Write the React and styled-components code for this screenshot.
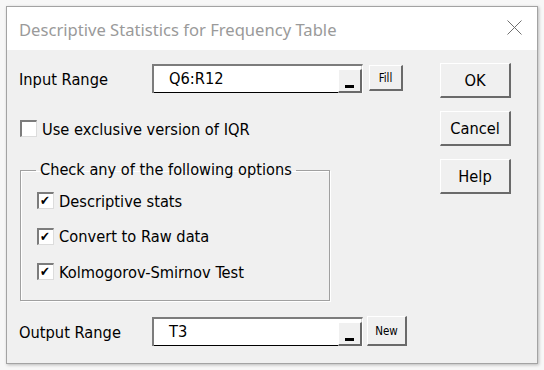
import React from "react"
import styled, { createGlobalStyle } from "styled-components"

const GlobalStyle = createGlobalStyle`
  html, body {
    margin: 0;
    padding: 0;
    background: #f7f7f7;
  }
  body {
    font-family: "DejaVu Sans Condensed", "DejaVu Sans", sans-serif;
    font-stretch: condensed;
  }
`

export default function App() {
  return (
    <>
      <GlobalStyle />
      <Janela>
        <BarraTitulo>
          <Titulo>Descriptive Statistics for Frequency Table</Titulo>
          <Fechar>
            <svg width="15" height="15" viewBox="0 0 15 15">
              <path d="M0.5 0.5 L14.5 14.5 M14.5 0.5 L0.5 14.5" stroke="#6f6f6f" strokeWidth="1" fill="none" />
            </svg>
          </Fechar>
        </BarraTitulo>
        <Corpo>
          <ColunaEsquerda>
            <Linha>
              <Rotulo>Input Range</Rotulo>
              <CaixaTexto>
                <Valor>Q6:R12</Valor>
                <BotaoSeta><Traco /></BotaoSeta>
              </CaixaTexto>
              <BotaoPequeno $largura={34} $altura={26}>Fill</BotaoPequeno>
            </Linha>

            <LinhaCheck $topo={27}>
              <Caixa />
              <TextoCheck>Use exclusive version of IQR</TextoCheck>
            </LinhaCheck>

            <Quadro>
              <Legenda>Check any of the following options</Legenda>
              <ListaOpcoes>
                <LinhaCheck>
                  <Caixa><Marca>✔</Marca></Caixa>
                  <TextoCheck>Descriptive stats</TextoCheck>
                </LinhaCheck>
                <LinhaCheck>
                  <Caixa><Marca>✔</Marca></Caixa>
                  <TextoCheck>Convert to Raw data</TextoCheck>
                </LinhaCheck>
                <LinhaCheck>
                  <Caixa><Marca>✔</Marca></Caixa>
                  <TextoCheck>Kolmogorov-Smirnov Test</TextoCheck>
                </LinhaCheck>
              </ListaOpcoes>
            </Quadro>

            <Linha $topo={15}>
              <Rotulo>Output Range</Rotulo>
              <CaixaTexto>
                <Valor>T3</Valor>
                <BotaoSeta><Traco /></BotaoSeta>
              </CaixaTexto>
              <BotaoPequeno $largura={40} $altura={30} $margem={4}>New</BotaoPequeno>
            </Linha>
          </ColunaEsquerda>

          <ColunaBotoes>
            <Botao>OK</Botao>
            <Botao>Cancel</Botao>
            <Botao>Help</Botao>
          </ColunaBotoes>
        </Corpo>
      </Janela>
    </>
  )
}

const Janela = styled.div`
  margin: 6px;
  width: 532px;
  height: 358px;
  box-sizing: border-box;
  border: 1px solid #a3a3a3;
  background: #f0f0f0;
  box-shadow: 1px 1px 3px rgba(0, 0, 0, 0.25);
  display: flex;
  flex-direction: column;
`

const BarraTitulo = styled.div`
  height: 43px;
  background: #ffffff;
  display: flex;
  align-items: center;
  justify-content: space-between;
  padding: 0 15px 0 12px;
`

const Titulo = styled.span`
  font-family: "Noto Sans", "Open Sans", sans-serif;
  font-stretch: normal;
  font-size: 16.6px;
  color: #9a9a9a;
  margin-top: 1px;
`

const Fechar = styled.div`
  display: flex;
  width: 15px;
  height: 15px;
  margin-top: -2px;
`

const Corpo = styled.div`
  flex: 1;
  display: flex;
  padding: 13px 0 0 12px;
`

const ColunaEsquerda = styled.div`
  width: 388px;
  display: flex;
  flex-direction: column;
`

const Linha = styled.div`
  display: flex;
  align-items: center;
  height: 30px;
  margin-top: ${p => p.$topo || 0}px;
`

const Rotulo = styled.span`
  width: 133px;
  font-size: 16.3px;
  color: #000;
  padding-top: 3px;
`

const CaixaTexto = styled.div`
  width: 211px;
  height: 29px;
  box-sizing: border-box;
  display: flex;
  align-items: stretch;
  border-top: 2px solid #7c7c7c;
  border-left: 2px solid #7c7c7c;
  border-right: 1px solid #ffffff;
  background: #ffffff;
  box-shadow: inset -1px 0 0 #d8d8d8;
`

const Valor = styled.div`
  flex: 1;
  font-size: 16.3px;
  padding: 3px 0 0 15px;
  border-bottom: 1px solid #000;
`

const BotaoSeta = styled.div`
  width: 24px;
  box-sizing: border-box;
  margin: 3px 0 0;
  background: #f0f0f0;
  border-top: 1px solid #ffffff;
  border-left: 1px solid #ffffff;
  border-right: 2px solid #6a6a6a;
  border-bottom: 2px solid #6a6a6a;
  display: flex;
  align-items: flex-end;
  justify-content: center;
  padding-bottom: 3px;
`

const Traco = styled.div`
  width: 9px;
  height: 3px;
  background: #000;
`

const BotaoPequeno = styled.div`
  width: ${p => p.$largura}px;
  height: ${p => p.$altura}px;
  margin-left: ${p => p.$margem ?? 6}px;
  box-sizing: border-box;
  background: #f0f0f0;
  border-top: 1px solid #ffffff;
  border-left: 1px solid #ffffff;
  border-right: 2px solid #6a6a6a;
  border-bottom: 2px solid #6a6a6a;
  display: flex;
  align-items: center;
  justify-content: center;
  font-size: 11.5px;
  color: #000;
`

const LinhaCheck = styled.div`
  display: flex;
  align-items: center;
  height: 17px;
  margin-top: ${p => p.$topo || 0}px;
  margin-left: 1px;
`

const Caixa = styled.div`
  width: 17px;
  height: 17px;
  box-sizing: border-box;
  background: #ffffff;
  border-top: 2px solid #7c7c7c;
  border-left: 2px solid #7c7c7c;
  border-right: 1px solid #dcdcdc;
  border-bottom: 1px solid #dcdcdc;
  display: flex;
  align-items: center;
  justify-content: flex-start;
  padding-left: 1px;
  flex-shrink: 0;
`

const Marca = styled.span`
  font-family: "DejaVu Sans", sans-serif;
  font-size: 13px;
  line-height: 1;
  color: #000;
  font-weight: bold;
  margin-top: -1px;
`

const TextoCheck = styled.span`
  font-size: 16.3px;
  color: #000;
  margin-left: 5px;
  padding-top: 1px;
`

const Quadro = styled.fieldset`
  margin: 24px 0 0 1px;
  width: 310px;
  height: 140px;
  box-sizing: border-box;
  padding: 0;
  border: 1px solid #a0a0a0;
  box-shadow: 1px 1px 0 #ffffff, inset 1px 1px 0 #ffffff;
`

const Legenda = styled.legend`
  margin-left: 15px;
  padding: 0 4px;
  font-size: 16.2px;
  line-height: 18px;
  color: #000;
`

const ListaOpcoes = styled.div`
  display: flex;
  flex-direction: column;
  gap: 18.5px;
  padding: 13px 0 0 15px;
`

const ColunaBotoes = styled.div`
  margin-left: 33px;
  display: flex;
  flex-direction: column;
  gap: 13px;
`

const Botao = styled.div`
  width: 71px;
  height: 35px;
  box-sizing: border-box;
  background: #f0f0f0;
  border-top: 1px solid #ffffff;
  border-left: 1px solid #ffffff;
  border-right: 2px solid #6a6a6a;
  border-bottom: 2px solid #6a6a6a;
  display: flex;
  align-items: center;
  justify-content: center;
  font-size: 16.3px;
  color: #000;
`
